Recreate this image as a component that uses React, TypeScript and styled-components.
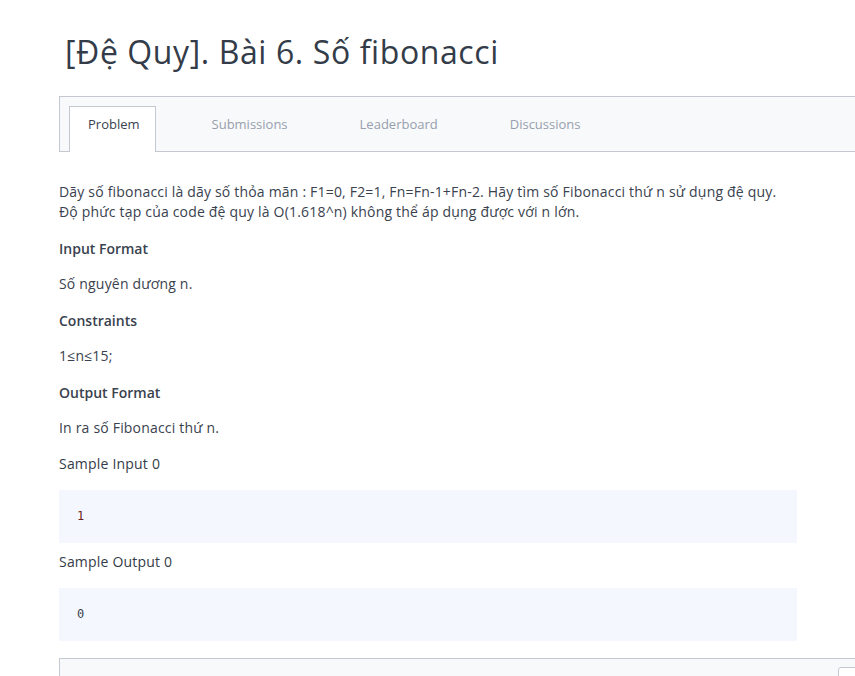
import React from "react";
import styled, { createGlobalStyle } from "styled-components";

const GlobalStyle = createGlobalStyle`
  html, body {
    margin: 0;
    padding: 0;
    background: #ffffff;
    overflow: hidden;
    font-family: "Open Sans", "Noto Sans", sans-serif;
    color: #39424e;
  }
`;

const Page = styled.div`
  padding: 30px 0 0 59px;
  width: 830px;
`;

const Title = styled.h1`
  margin: 0 0 0 6px;
  font-size: 32px;
  line-height: 44px;
  font-weight: 400;
  letter-spacing: 0.6px;
  color: #333c48;
`;

const TabBar = styled.div`
  margin-top: 22px;
  display: flex;
  gap: 37px;
  padding: 9px 0 0 9px;
  background: #f8f9fa;
  border: 1px solid #c2c7d0;
  border-right: none;
`;

const Tab = styled.div<{ $active?: boolean }>`
  box-sizing: border-box;
  height: 46px;
  margin-bottom: -1px;
  padding: 0 15px 10px 18px;
  font-size: 13px;
  line-height: 35px;
  border: 1px solid ${(p) => (p.$active ? "#c2c7d0" : "transparent")};
  border-bottom: none;
  background: ${(p) => (p.$active ? "#ffffff" : "transparent")};
  color: ${(p) => (p.$active ? "#39424e" : "#979faf")};
`;

const Content = styled.div`
  width: 738px;
  padding-top: 30px;
  display: flex;
  flex-direction: column;
`;

const Para = styled.p`
  margin: 0 0 16px;
  font-size: 14px;
  line-height: 20px;
  letter-spacing: 0.19px;
  color: #39424e;
`;

const Heading = styled.h4`
  margin: 1px 0 15px;
  font-size: 14px;
  line-height: 20px;
  font-weight: 600;
  color: #39424e;
`;

const SampleTitle = styled.h4`
  margin: 0;
  font-size: 14px;
  line-height: 20px;
  font-weight: 400;
  letter-spacing: 0.2px;
  color: #333c48;
`;

const CodeBlock = styled.pre`
  margin: 16px 0 9px;
  padding: 18px 18px;
  background: #f4f8fe;
  font-family: "DejaVu Sans Mono", "Liberation Mono", monospace;
  font-size: 12px;
  line-height: 17px;
`;

const CodeText = styled.span<{ $tone: string }>`
  color: ${(p) => p.$tone};
`;

const BottomPanel = styled.div`
  margin-top: 8px;
  display: flex;
  justify-content: flex-end;
  padding: 8px 11px 0 0;
  height: 40px;
  background: #f8f9fa;
  border-top: 1px solid #c2c7d0;
  border-left: 1px solid #c2c7d0;
`;

const SmallBox = styled.div`
  width: 38px;
  height: 30px;
  background: #ffffff;
  border: 1px solid #c2c7d0;
  border-radius: 3px;
`;

export default function App() {
  const tabs = ["Problem", "Submissions", "Leaderboard", "Discussions"];
  return (
    <>
      <GlobalStyle />
      <Page>
        <Title>[Đệ Quy]. Bài 6. Số fibonacci</Title>
        <TabBar>
          {tabs.map((t, i) => (
            <Tab key={t} $active={i === 0}>
              {t}
            </Tab>
          ))}
        </TabBar>
        <Content>
          <Para>
            Dãy số fibonacci là dãy số thỏa mãn : F1=0, F2=1, Fn=Fn-1+Fn-2. Hãy tìm số Fibonacci thứ n sử dụng đệ quy.
            <br />
            Độ phức tạp của code đệ quy là O(1.618^n) không thể áp dụng được với n lớn.
          </Para>
          <Heading>Input Format</Heading>
          <Para>Số nguyên dương n.</Para>
          <Heading>Constraints</Heading>
          <Para>1≤n≤15;</Para>
          <Heading>Output Format</Heading>
          <Para>In ra số Fibonacci thứ n.</Para>
          <SampleTitle>Sample Input 0</SampleTitle>
          <CodeBlock>
            <CodeText $tone="#6b1f1f">1</CodeText>
          </CodeBlock>
          <SampleTitle>Sample Output 0</SampleTitle>
          <CodeBlock>
            <CodeText $tone="#39424e">0</CodeText>
          </CodeBlock>
        </Content>
        <BottomPanel>
          <SmallBox />
        </BottomPanel>
      </Page>
    </>
  );
}
